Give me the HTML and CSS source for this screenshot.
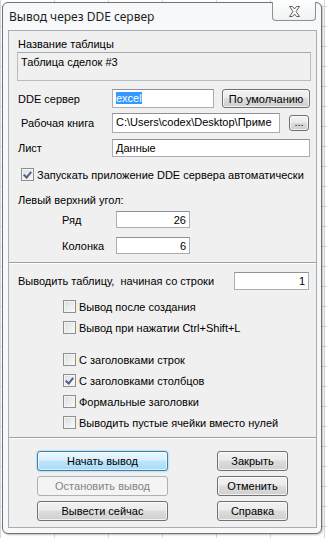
FILE: index.html
```html
<!DOCTYPE html>
<html lang="ru">
  <head>
    <meta charset="UTF-8" />
    <title>Вывод через DDE сервер</title>
    <link rel="stylesheet" href="styles.css">
  </head>
  <body>
    <div class="window">
      <div class="titlebar">
        <span class="title">Вывод через DDE сервер</span>
        <span class="close-btn">
          <svg width="13" height="11" viewBox="0 0 13 11">
            <path d="M1.5 0.5h3l2 2.5 2-2.5h3l-3.5 5 3.5 5h-3l-2-2.5-2 2.5h-3l3.5-5z" fill="#fff" stroke="#5a5e63" stroke-width="1" stroke-linejoin="round" />
          </svg>
        </span>
      </div>

      <div class="client">
        <div class="caption">Название таблицы</div>
        <div class="name-box">Таблица сделок #3</div>

        <!-- DDE сервер -->
        <div class="row row-dde">
          <span class="label">DDE сервер</span>
          <span class="input input-dde"><span class="sel">excel</span></span>
          <span class="btn btn-default-value">По умолчанию</span>
        </div>

        <div class="row row-book">
          <span class="label">Рабочая книга</span>
          <span class="input input-book">C:\Users\codex\Desktop\Приме</span>
          <span class="btn btn-dots">...</span>
        </div>

        <div class="row row-sheet">
          <span class="label">Лист</span>
          <span class="input input-sheet">Данные</span>
        </div>

        <div class="check check-auto">
          <span class="box checked"></span>
          <span>Запускать приложение DDE сервера автоматически</span>
        </div>

        <div class="caption caption-corner">Левый верхний угол:</div>

        <div class="row row-num row-first">
          <span class="label">Ряд</span>
          <span class="input input-num">26</span>
        </div>
        <div class="row row-num row-second">
          <span class="label">Колонка</span>
          <span class="input input-num">6</span>
        </div>

        <div class="separator sep-first"></div>

        <div class="row row-start">
          <span class="label">Выводить таблицу,&nbsp; начиная со строки</span>
          <span class="input input-start">1</span>
        </div>

        <!-- флажки вывода -->
        <div class="check opt first">
          <span class="box"></span><span>Вывод после создания</span>
        </div>
        <div class="check opt">
          <span class="box"></span><span>Вывод при нажатии Ctrl+Shift+L</span>
        </div>
        <div class="check opt group">
          <span class="box"></span><span>С заголовками строк</span>
        </div>
        <div class="check opt">
          <span class="box checked"></span><span>С заголовками столбцов</span>
        </div>
        <div class="check opt">
          <span class="box"></span><span>Формальные заголовки</span>
        </div>
        <div class="check opt">
          <span class="box"></span><span>Выводить пустые ячейки вместо нулей</span>
        </div>

        <div class="separator sep-second"></div>

        <!-- кнопки -->
        <div class="buttons">
          <div class="btn-col btn-col-left">
            <span class="btn btn-main default">Начать вывод</span>
            <span class="btn btn-main disabled">Остановить вывод</span>
            <span class="btn btn-main">Вывести сейчас</span>
          </div>
          <div class="btn-col btn-col-right">
            <span class="btn btn-side">Закрыть</span>
            <span class="btn btn-side">Отменить</span>
            <span class="btn btn-side">Справка</span>
          </div>
        </div>
      </div>
    </div>
  </body>
</html>
```

FILE: styles.css
```css
body {
  margin: 0;
  width: 327px;
  height: 538px;
  overflow: hidden;
  font-family: "Liberation Sans", Arial, sans-serif;
  font-size: 11px;
  color: #000;
  background-color: #fff;
  background-image:
    linear-gradient(to right, #d4d8de 1px, transparent 1px),
    linear-gradient(to bottom, #d4d8de 1px, transparent 1px);
  background-size: 54px 20px;
  background-position: 0 0, 0 6px;
}

.window {
  box-sizing: border-box;
  width: 320px;
  height: 532px;
  margin: 2px 0 0 2px;
  border: 1px solid #6e7378;
  border-radius: 6px;
  background: #f6f8fa;
  box-shadow: 1px 1px 2px rgba(0, 0, 0, 0.25);
}

.titlebar {
  display: flex;
  justify-content: space-between;
  height: 27px;
}

.title {
  margin: 6px 0 0 6px;
  font-family: "Noto Sans", "Liberation Sans", sans-serif;
  font-size: 12px;
  line-height: 16px;
  color: #1e1e1e;
}

.close-btn {
  box-sizing: border-box;
  display: flex;
  align-items: center;
  justify-content: center;
  width: 44px;
  height: 19px;
  margin: -1px 5px 0 0;
  border: 1px solid #8a9096;
  border-top: none;
  border-radius: 0 0 4px 4px;
  background: linear-gradient(#fdfdfd, #f0f2f4);
}

.client {
  width: 307px;
  height: 496px;
  margin-left: 5px;
  border: 1px solid #a9adb2;
  background: #f0f0f0;
  line-height: 14px;
}

.caption {
  margin: 6px 0 0 9px;
  height: 14px;
}

.name-box {
  box-sizing: border-box;
  width: 294px;
  height: 29px;
  margin: 1px 0 0 8px;
  padding: 2px 3px;
  border: 1px solid #b8bcc0;
  border-top-color: #a5a9ad;
}

.row {
  display: flex;
  align-items: center;
}

.label {
  box-sizing: border-box;
  padding-left: 9px;
  width: 103px;
  flex-shrink: 0;
}

.input {
  box-sizing: border-box;
  display: block;
  height: 100%;
  padding: 0 3px;
  border: 1px solid #abadb3;
  border-top-color: #8e9197;
  background: #fff;
  white-space: nowrap;
  overflow: hidden;
  line-height: 16px;
}

.sel {
  background: #3399ff;
  color: #fff;
}

.row-dde {
  margin-top: 8px;
  height: 19px;
}

.input-dde {
  width: 102px;
}

.btn {
  box-sizing: border-box;
  display: flex;
  align-items: center;
  justify-content: center;
  border: 1px solid #707070;
  border-radius: 3px;
  background: linear-gradient(#f2f2f2 0%, #ebebeb 45%, #dddddd 50%, #cfcfcf 100%);
  box-shadow: inset 0 0 0 1px rgba(255, 255, 255, 0.7);
  white-space: nowrap;
}

.btn-default-value {
  width: 88px;
  height: 19px;
  margin-left: 8px;
}

.row-book {
  margin-top: 5px;
  height: 20px;
}

.row-book .label {
  padding-left: 12px;
}

.input-book {
  width: 168px;
}

.btn-dots {
  width: 20px;
  height: 16px;
  margin-left: 9px;
  padding-bottom: 3px;
}

.row-sheet {
  margin-top: 6px;
  height: 18px;
}

.input-sheet {
  width: 198px;
}

.check {
  display: flex;
  align-items: center;
  height: 15px;
}

.box {
  box-sizing: border-box;
  display: flex;
  align-items: center;
  justify-content: center;
  width: 13px;
  height: 13px;
  margin-right: 3px;
  border: 1px solid #8e8f8f;
  background: linear-gradient(135deg, #dcdcdc, #fbfbfb);
  box-shadow: inset 0 0 0 1px #f4f4f4;
}

.box.checked::after {
  content: "";
  width: 3px;
  height: 6px;
  margin-top: -2px;
  border: solid #4d6185;
  border-width: 0 2px 2px 0;
  transform: rotate(40deg);
}

.check-auto {
  margin: 10px 0 0 12px;
}

.caption-corner {
  margin-top: 11px;
}

.row-num {
  height: 17px;
}

.row-num .label {
  padding-left: 53px;
  width: 107px;
}

.row-first {
  margin-top: 4px;
}

.row-second {
  margin-top: 9px;
}

.input-num {
  width: 74px;
  text-align: right;
}

.separator {
  height: 1px;
  border-bottom: 1px solid #fff;
  background: #a0a0a0;
}

.sep-first {
  margin-top: 8px;
}

.row-start {
  margin-top: 8px;
  height: 18px;
}

.row-start .label {
  width: 225px;
}

.input-start {
  width: 75px;
  text-align: right;
}

.opt {
  margin: 6px 0 0 54px;
}

.opt.first {
  margin-top: 9px;
}

.opt.group {
  margin-top: 17px;
}

.sep-second {
  margin-top: 7px;
}

.buttons {
  display: flex;
  margin: 12px 0 0 28px;
}

.btn-col {
  display: flex;
  flex-direction: column;
  gap: 5px;
}

.btn-col-left {
  width: 131px;
}

.btn-col-right {
  width: 71px;
  margin-left: 49px;
}

.btn-main,
.btn-side {
  height: 20px;
}

.btn.default {
  border-color: #3c7fb1;
  background: linear-gradient(#eaf6fd 0%, #d9f0fc 45%, #bee6fd 50%, #a7d9f5 100%);
  box-shadow: inset 0 0 0 1px rgba(255, 255, 255, 0.6), 0 0 2px #5fb5e8;
}

.btn.disabled {
  border-color: #adb2b5;
  background: #f4f4f4;
  box-shadow: none;
  color: #838383;
}
```
